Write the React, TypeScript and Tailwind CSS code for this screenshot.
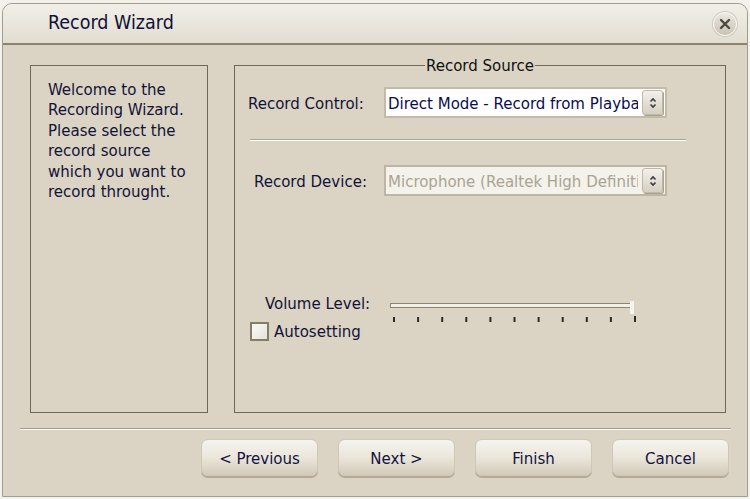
import React from "react";

const font = { fontFamily: '"DejaVu Sans Condensed", "DejaVu Sans", sans-serif', fontStretch: "condensed" } as React.CSSProperties;

function Arrows() {
  return (
    <div className="shrink-0 w-[21px] h-[25px] rounded-[3px] border border-[#bfb8a6] bg-gradient-to-b from-[#f3f1ec] to-[#d5cfc1] flex items-center justify-center shadow-[1px_1px_0_#a9a290]">
      <svg width="8" height="12" viewBox="0 0 8 12">
        <path d="M1.5 4.5 L4 2 L6.5 4.5" stroke="#3a3a3a" strokeWidth="1.6" fill="none" />
        <path d="M1.5 7.5 L4 10 L6.5 7.5" stroke="#3a3a3a" strokeWidth="1.6" fill="none" />
      </svg>
    </div>
  );
}

function Select({ text, disabled }: { text: string; disabled?: boolean }) {
  return (
    <div
      className={
        "w-[283px] h-[31px] border-2 flex items-center pl-[2px] pr-[2px] " +
        (disabled ? "bg-[#f4f2ea] border-[#bdb6a5]" : "bg-white border-[#c2bbaa]")
      }
    >
      <div
        className={
          "flex-1 min-w-0 mr-[4px] overflow-hidden whitespace-nowrap text-[16.7px] leading-[20px] " +
          (disabled ? "text-[#aaa494]" : "text-[#0b0b52]")
        }
      >
        {text}
      </div>
      <Arrows />
    </div>
  );
}

function Btn({ label }: { label: string }) {
  return (
    <div className="w-[117px] h-[37px] rounded-[7px] border border-[#cfc8b7] bg-gradient-to-b from-[#f6f4ef] via-[#ebe6db] to-[#d3cbb8] shadow-[0_2px_0_#b2aa96] flex items-center justify-center text-[16.7px] leading-[20px] text-[#121240]">
      {label}
    </div>
  );
}

export default function App() {
  const ticks = Array.from({ length: 11 }, (_, i) => 3 + i * 24.1);
  return (
    <div className="w-[750px] h-[499px] bg-[#f3f1ec] pt-[3px] pl-[2px] overflow-hidden" style={font}>
      <div className="w-[746px] h-[494px] bg-[#dbd4c4] border border-[#a39c8b] rounded-tl-[10px] rounded-tr-[10px] overflow-hidden flex flex-col">
        {/* Title bar */}
        <div className="h-[41px] shrink-0 bg-gradient-to-b from-[#f1efe8] to-[#e2ddd1] border-b-2 border-[#8a8272] flex items-center justify-between pl-[45px] pr-[10px]">
          <div className="text-[19.5px] text-[#101038] leading-[22px] mt-[-2px]">Record Wizard</div>
          <div className="w-[24px] h-[24px] rounded-full bg-gradient-to-b from-[#ebe8e1] to-[#c9c3b4] border border-[#f8f6f2] shadow-[0_0_0_1px_#cfc9ba] flex items-center justify-center">
            <svg width="12" height="12" viewBox="0 0 12 12">
              <path d="M2 2 L10 10 M10 2 L2 10" stroke="#4e493e" strokeWidth="2.4" strokeLinecap="round" />
            </svg>
          </div>
        </div>

        {/* Body */}
        <div className="flex pl-[27px] pt-[20px] gap-[26px]">
          <div className="w-[178px] h-[348px] border border-[#6f6858] pl-[17px] pt-[13px] text-[16.7px] leading-[20.4px] text-[#121238]">
            Welcome to the<br />Recording Wizard.<br />Please select the<br />record source<br />which you want to<br />record throught.
          </div>

          <div className="relative w-[492px] h-[348px] border border-[#6f6858] flex flex-col text-[16.7px] text-[#121238]">
            <div className="absolute top-[-11px] left-1/2 -translate-x-1/2 bg-[#dbd4c4] px-[1px] leading-[20px] text-[#101010]">
              Record Source
            </div>

            <div className="flex items-center mt-[21px]">
              <div className="ml-[13px] w-[136px] leading-[20px]">Record Control:</div>
              <Select text="Direct Mode - Record from Playback" />
            </div>

            <div className="ml-[15px] w-[436px] mt-[21px] border-t border-[#aaa393] border-b border-b-white" />

            <div className="flex items-center mt-[24px]">
              <div className="ml-[19px] w-[130px] leading-[20px]">Record Device:</div>
              <Select text="Microphone (Realtek High Definition Audio)" disabled />
            </div>

            <div className="flex items-start mt-[100px] h-[26px]">
              <div className="ml-[30px] w-[125px] leading-[16px] mt-[-1px]">Volume Level:</div>
              <svg width="250" height="26" viewBox="0 0 250 26">
                <rect x="0.5" y="7.5" width="241" height="4" fill="#f3f0e8" stroke="#8d8574" />
                <rect x="240" y="5" width="4" height="13" fill="#f6f4ef" />
                {ticks.map((x, i) => (
                  <rect key={i} x={x} y={i === 10 ? 20 : 21} width="2" height={i === 10 ? 6 : 5} fill="#2a2a2a" />
                ))}
              </svg>
            </div>

            <div className="flex items-center ml-[15px] mt-[-1px]">
              <div className="w-[19px] h-[19px] border-2 border-[#857d6b] bg-gradient-to-br from-[#fbfaf6] to-[#e6e2d8]" />
              <div className="ml-[5px] leading-[20px]">Autosetting</div>
            </div>
          </div>
        </div>

        <div className="ml-[17px] w-[711px] mt-[15px] border-t border-[#a39c8d] border-b border-b-white" />

        <div className="flex justify-end gap-[20px] pr-[18px] mt-[9px]">
          <Btn label="< Previous" />
          <Btn label="Next >" />
          <Btn label="Finish" />
          <Btn label="Cancel" />
        </div>
      </div>
    </div>
  );
}
